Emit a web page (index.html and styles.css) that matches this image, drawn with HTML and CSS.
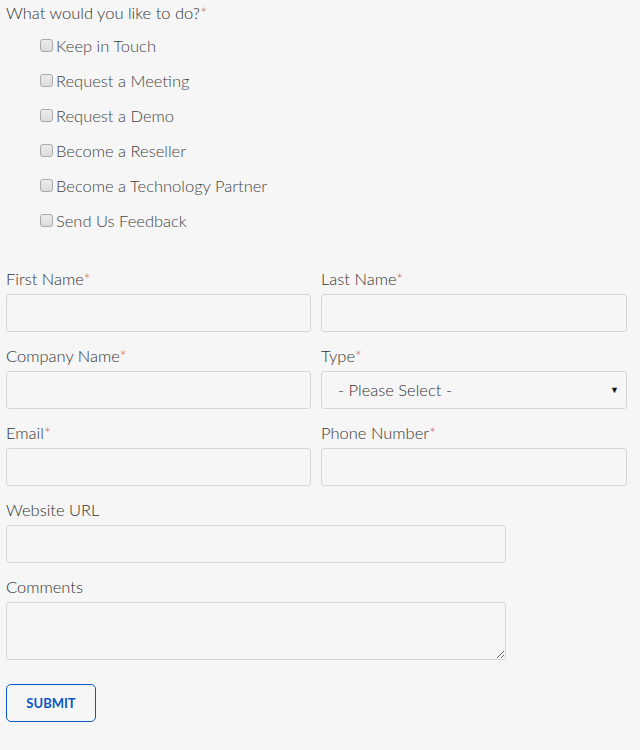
FILE: index.html
```html
<!DOCTYPE html>
<html>
<head>
<meta charset="utf-8">
<link rel="stylesheet" href="styles.css">
</head>
<body>
<form class="form">
  <div class="question">
    <div class="label">What would you like to do?<span class="req">*</span></div>
    <ul class="checks">
      <li><label><input type="checkbox" class="cb"><span>Keep in Touch</span></label></li>
      <li><label><input type="checkbox" class="cb"><span>Request a Meeting</span></label></li>
      <li><label><input type="checkbox" class="cb"><span>Request a Demo</span></label></li>
      <li><label><input type="checkbox" class="cb"><span>Become a Reseller</span></label></li>
      <li><label><input type="checkbox" class="cb"><span>Become a Technology Partner</span></label></li>
      <li><label><input type="checkbox" class="cb"><span>Send Us Feedback</span></label></li>
    </ul>
  </div>

  <div class="row two">
    <div class="field"><div class="label">First Name<span class="req">*</span></div><input class="input" type="text"></div>
    <div class="field"><div class="label">Last Name<span class="req">*</span></div><input class="input" type="text"></div>
  </div>
  <div class="row two">
    <div class="field"><div class="label">Company Name<span class="req">*</span></div><input class="input" type="text"></div>
    <div class="field"><div class="label">Type<span class="req">*</span></div>
      <div class="select-wrap">
        <select class="input select"><option>- Please Select -</option></select>
        <span class="arrow">&#9660;</span>
      </div>
    </div>
  </div>
  <div class="row two">
    <div class="field"><div class="label">Email<span class="req">*</span></div><input class="input" type="text"></div>
    <div class="field"><div class="label">Phone Number<span class="req">*</span></div><input class="input" type="text"></div>
  </div>
  <div class="row one">
    <div class="field"><div class="label">Website URL</div><input class="input" type="text"></div>
  </div>
  <div class="row one">
    <div class="field"><div class="label">Comments</div><textarea class="input textarea"></textarea></div>
  </div>
  <div class="actions">
    <button type="button" class="submit">SUBMIT</button>
  </div>
</form>
</body>
</html>
```

FILE: styles.css
```css
html, body {
  margin: 0;
  padding: 0;
  background: #f6f6f6;
}
body {
  font-family: "Lato Light", Lato, "Open Sans", sans-serif;
  font-weight: 300;
  font-size: 16.5px;
  color: #333;
}
.form {
  padding: 3px 6px 0 6px;
  width: 621px;
}
.label {
  line-height: 20px;
  height: 20px;
  color: #333;
}
.req {
  color: #c0685c;
}
.checks {
  list-style: none;
  margin: 6px 0 0 34px;
  padding: 0;
}
.checks li {
  height: 35px;
  line-height: 35px;
}
.checks label {
  display: flex;
  align-items: center;
  height: 35px;
}
.cb {
  appearance: none;
  -webkit-appearance: none;
  width: 13px;
  height: 13px;
  margin: 0 3px 2px 0;
  border: 1px solid #a9a9a9;
  border-radius: 3px;
  background: linear-gradient(#ececec, #dcdcdc);
  box-sizing: border-box;
}
.checks span {
  color: #444;
}
.row {
  margin-top: 14px;
}
.question + .row {
  margin-top: 30px;
}
.row.two {
  display: grid;
  grid-template-columns: 305px 306px;
  column-gap: 10px;
}
.row.one {
  width: 500px;
}
.field .label {
  margin-bottom: 5px;
}
.input {
  display: block;
  width: 100%;
  height: 38px;
  box-sizing: border-box;
  border: 1px solid #d6d6d6;
  border-radius: 3px;
  background: #f6f6f6;
  font-family: inherit;
  font-weight: 300;
  font-size: 16.5px;
  color: #333;
  margin: 0;
  padding: 0 12px;
}
.select-wrap {
  position: relative;
}
.select {
  appearance: none;
  -webkit-appearance: none;
  padding-left: 16px;
  color: #333;
}
.arrow {
  position: absolute;
  right: 8px;
  top: 14px;
  font-size: 9px;
  line-height: 10px;
  color: #111;
  pointer-events: none;
}
.textarea {
  height: 58px;
  resize: vertical;
  padding: 6px 12px;
}
.actions {
  margin-top: 24px;
}
.submit {
  width: 90px;
  height: 38px;
  box-sizing: border-box;
  border: 1px solid #0b57c4;
  border-radius: 5px;
  background: transparent;
  color: #0b57c4;
  font-family: Lato, sans-serif;
  font-weight: 700;
  font-size: 13px;
  letter-spacing: 0;
  padding: 0;
}
```
